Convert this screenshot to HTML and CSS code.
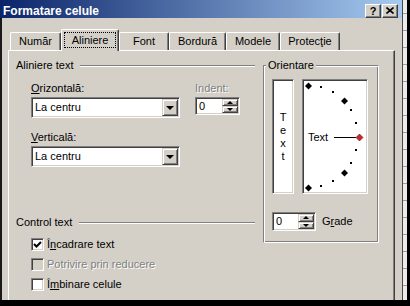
FILE: index.html
```html
<!DOCTYPE html>
<html lang="ro">
<head>
    <meta charset="UTF-8">
    <title>Formatare celule</title>
    <link rel="stylesheet" href="styles.css">
</head>
<body>
    <div class="screen">
        <div class="dialog">
            <div class="titlebar">
                <span class="title">Formatare celule</span>
                <div class="caption-buttons">
                    <span class="cap-btn">?</span>
                    <span class="cap-btn">
                        <svg width="8" height="7" viewBox="0 0 8 7"><path d="M0.5 0.5 L7.5 6.5 M7.5 0.5 L0.5 6.5" stroke="#000" stroke-width="1.6"/></svg>
                    </span>
                </div>
            </div>

            <div class="client">
                <div class="tabs">
                    <div class="tab w-numar">Număr</div>
                    <div class="tab active w-aliniere"><span class="focus">Aliniere</span></div>
                    <div class="tab w-font">Font</div>
                    <div class="tab w-bordura">Bordură</div>
                    <div class="tab w-modele">Modele</div>
                    <div class="tab w-protectie">Protecţie</div>
                </div>

                <div class="panel">
                    <div class="col-left">
                        <div class="group-head"><span>Aliniere text</span><i class="rule"></i></div>

                        <div class="align-grid">
                            <div class="field">
                                <label><u>O</u>rizontală:</label>
                                <div class="combo">
                                    <span class="combo-val">La centru</span>
                                    <span class="btn3d drop"><i class="arrow-down"></i></span>
                                </div>
                            </div>
                            <div class="field">
                                <label class="disabled">Indent:</label>
                                <div class="spin indent-spin">
                                    <span class="spin-val">0</span>
                                    <span class="spin-btns">
                                        <span class="btn3d"><i class="arrow-up"></i></span>
                                        <span class="btn3d"><i class="arrow-down small"></i></span>
                                    </span>
                                </div>
                            </div>
                            <div class="field">
                                <label><u>V</u>erticală:</label>
                                <div class="combo">
                                    <span class="combo-val">La centru</span>
                                    <span class="btn3d drop"><i class="arrow-down"></i></span>
                                </div>
                            </div>
                        </div>

                        <div class="group-head control"><span>Control text</span><i class="rule"></i></div>

                        <div class="checks">
                            <div class="check-row">
                                <span class="checkbox">
                                    <svg width="9" height="9" viewBox="0 0 9 9"><path d="M1 4 L3.5 6.5 L8 2" fill="none" stroke="#000" stroke-width="2"/></svg>
                                </span>
                                <span>Î<u>n</u>cadrare text</span>
                            </div>
                            <div class="check-row">
                                <span class="checkbox off"></span>
                                <span class="disabled">Potrivire prin reducere</span>
                            </div>
                            <div class="check-row">
                                <span class="checkbox"></span>
                                <span>Î<u>m</u>binare celule</span>
                            </div>
                        </div>
                    </div>

                    <fieldset class="orient">
                        <legend>Orientare</legend>
                        <div class="orient-body">
                            <div class="orient-boxes">
                                <div class="sunken vtext">
                                    <span>T</span><span>e</span><span>x</span><span>t</span>
                                </div>
                                <div class="sunken dial">
                                    <svg width="64" height="113" viewBox="0 0 64 113">
                                        <g fill="#000">
                                            <rect x="17" y="6" width="2" height="2"/>
                                            <rect x="29" y="11" width="2" height="2"/>
                                            <rect x="47" y="29" width="2" height="2"/>
                                            <rect x="52" y="42" width="2" height="2"/>
                                            <rect x="52" y="69" width="2" height="2"/>
                                            <rect x="47" y="82" width="2" height="2"/>
                                            <rect x="29" y="100" width="2" height="2"/>
                                            <rect x="17" y="105" width="2" height="2"/>
                                            <polygon points="5.5,2.5 9,6 5.5,9.5 2,6"/>
                                            <polygon points="41.5,17.5 45,21 41.5,24.5 38,21"/>
                                            <polygon points="41.5,89.5 45,93 41.5,96.5 38,93"/>
                                            <polygon points="5.5,104.5 9,108 5.5,111.5 2,108"/>
                                            <rect x="31" y="57" width="22" height="1"/>
                                            <text x="5" y="61" font-family="Liberation Sans, Arial, sans-serif" font-size="11">Text</text>
                                        </g>
                                        <polygon points="56.5,54 60,57.5 56.5,61 53,57.5" fill="#c8282c" stroke="#5a1010" stroke-width="0.6"/>
                                    </svg>
                                </div>
                            </div>
                            <div class="degree-row">
                                <div class="spin degree-spin">
                                    <span class="spin-val">0</span>
                                    <span class="spin-btns">
                                        <span class="btn3d"><i class="arrow-up"></i></span>
                                        <span class="btn3d"><i class="arrow-down small"></i></span>
                                    </span>
                                </div>
                                <label>G<u>r</u>ade</label>
                            </div>
                        </div>
                    </fieldset>
                </div>
            </div>
        </div>
        <div class="sheet-edge"></div>
    </div>
</body>
</html>
```

FILE: styles.css
```css
body {
    margin: 0;
    background-color: #000;
    font-family: "Liberation Sans", Arial, sans-serif;
    font-size: 11px;
    color: #000;
}
.screen {
    display: flex;
    height: 300px;
}
.dialog {
    width: 402px;
    border-right: 1px solid #4a4a4a;
    background-color: #d4d0c8;
    display: flex;
    flex-direction: column;
}
.sheet-edge {
    width: 4px;
    background: repeating-linear-gradient(to bottom, #ececec 0 13px, #9c9c9c 13px 14px, #ececec 14px 17px);
}

/* title bar */
.titlebar {
    height: 18px;
    box-sizing: border-box;
    padding: 3px 4px 0 3px;
    background: linear-gradient(to right, #0a246a, #a6caf0);
    display: flex;
    align-items: center;
    justify-content: space-between;
}
.title {
    color: #fff;
    font-weight: bold;
    font-size: 12px;
}
.caption-buttons {
    display: flex;
    gap: 1px;
}
.cap-btn {
    width: 16px;
    height: 14px;
    box-sizing: border-box;
    display: flex;
    align-items: center;
    justify-content: center;
    background-color: #d4d0c8;
    border: 1px solid;
    border-color: #fff #404040 #404040 #fff;
    box-shadow: inset -1px -1px #808080;
    font-weight: bold;
    font-size: 11px;
}

/* tabs */
.client {
    flex: 1;
    border-left: 2px solid #1a1a1a;
    padding: 11px 0 0 6px;
}
.tabs {
    display: flex;
    align-items: flex-start;
    height: 22px;
    padding-left: 2px;
    margin-bottom: -1px;
    position: relative;
    z-index: 1;
}
.tab {
    height: 18px;
    margin-top: 3px;
    box-sizing: border-box;
    border-top: 1px solid #fff;
    border-left: 1px solid #fff;
    border-right: 1px solid #404040;
    border-radius: 2px 2px 0 0;
    box-shadow: inset -1px 0 #808080;
    text-align: center;
    line-height: 17px;
}
.tab.active {
    height: 22px;
    margin-top: 0;
    background-color: #d4d0c8;
}
.focus {
    display: block;
    margin: 2px 2px 0 2px;
    height: 16px;
    box-sizing: border-box;
    border: 1px dotted #000;
    line-height: 14px;
}
.w-numar { width: 51px; }
.w-aliniere { width: 58px; }
.w-font { width: 50px; }
.w-bordura { width: 57px; }
.w-modele { width: 54px; }
.w-protectie { width: 60px; }

/* panel */
.panel {
    width: 387px;
    height: 250px;
    box-sizing: border-box;
    border-top: 1px solid #fff;
    border-left: 1px solid #fff;
    border-right: 1px solid #404040;
    box-shadow: inset -1px 0 #808080;
    padding: 8px 0 0 7px;
    display: flex;
    gap: 8px;
}
.col-left {
    width: 239px;
}
.group-head {
    display: flex;
    align-items: center;
    height: 13px;
    line-height: 13px;
}
.group-head.control {
    margin-top: 49px;
}
.rule {
    flex: 1;
    margin-left: 7px;
    border-top: 1px solid #808080;
    border-bottom: 1px solid #fff;
}
label {
    display: block;
    line-height: 13px;
}
u {
    text-decoration-thickness: 1px;
    text-underline-offset: 1px;
}
.disabled {
    color: #808080;
    text-shadow: 1px 1px #fff;
}

.align-grid {
    display: grid;
    grid-template-columns: 149px 45px;
    column-gap: 15px;
    row-gap: 13px;
    margin-top: 10px;
    padding-left: 15px;
}
.field label {
    margin-bottom: 2px;
}

/* 3d bits */
.sunken, .combo, .spin, .checkbox {
    box-sizing: border-box;
    border: 1px solid;
    border-color: #808080 #fff #fff #808080;
    box-shadow: inset 1px 1px #404040, inset -1px -1px #d4d0c8;
    background-color: #fff;
}
.btn3d {
    box-sizing: border-box;
    display: flex;
    align-items: center;
    justify-content: center;
    background-color: #d4d0c8;
    border: 1px solid;
    border-color: #d4d0c8 #404040 #404040 #d4d0c8;
    box-shadow: inset 1px 1px #fff, inset -1px -1px #808080;
}
.arrow-down {
    width: 0;
    height: 0;
    border-left: 4px solid transparent;
    border-right: 4px solid transparent;
    border-top: 4px solid #000;
}
.arrow-down.small, .arrow-up {
    border-left-width: 3px;
    border-right-width: 3px;
    border-top-width: 3px;
}
.arrow-up {
    width: 0;
    height: 0;
    border-left: 3px solid transparent;
    border-right: 3px solid transparent;
    border-bottom: 3px solid #000;
}

.combo {
    height: 21px;
    display: flex;
    padding: 1px;
}
.combo-val {
    flex: 1;
    padding-left: 2px;
    line-height: 17px;
}
.drop {
    width: 16px;
    height: 17px;
}

.spin {
    display: flex;
    padding: 1px;
}
.spin-val {
    flex: 1;
    padding-left: 2px;
}
.spin-btns {
    display: flex;
    flex-direction: column;
    width: 16px;
}
.spin-btns .btn3d {
    flex: 1;
}
.indent-spin {
    height: 18px;
    margin-top: 1px;
    line-height: 14px;
}
.degree-spin {
    width: 44px;
    height: 19px;
    line-height: 15px;
}

/* checkboxes */
.checks {
    margin-top: 5px;
    padding-left: 15px;
}
.check-row {
    height: 20px;
    display: flex;
    align-items: center;
    gap: 3px;
}
.checkbox {
    width: 13px;
    height: 13px;
    display: flex;
    align-items: center;
    justify-content: center;
}
.checkbox.off {
    background-color: #d4d0c8;
}

/* orientation group */
.orient {
    width: 116px;
    height: 184px;
    box-sizing: border-box;
    margin: 0;
    padding: 0;
    border: 1px solid;
    border-color: #808080 #fff #fff #808080;
    box-shadow: inset 1px 1px #fff, inset -1px -1px #808080;
}
.orient legend {
    margin-left: 2px;
    padding: 0 2px;
    line-height: 13px;
    background-color: #d4d0c8;
}
.orient-body {
    padding: 7px 0 0 8px;
}
.orient-boxes {
    display: flex;
    gap: 8px;
}
.vtext {
    width: 22px;
    height: 115px;
    display: flex;
    flex-direction: column;
    justify-content: center;
    align-items: center;
    line-height: 13px;
}
.dial {
    width: 66px;
    height: 115px;
}
.dial svg {
    display: block;
}
.degree-row {
    display: flex;
    align-items: center;
    gap: 6px;
    margin-top: 18px;
}
```
